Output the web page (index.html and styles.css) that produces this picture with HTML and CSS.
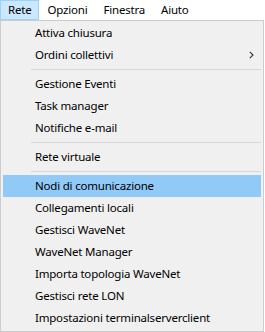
FILE: index.html
```html
<!DOCTYPE html>
<html>
<head>
<meta charset="utf-8">
<link rel="stylesheet" href="styles.css">
</head>
<body>
<div class="menubar">
  <span class="top active">Rete</span>
  <span class="top">Opzioni</span>
  <span class="top">Finestra</span>
  <span class="top">Aiuto</span>
</div>
<div class="menu">
  <div class="item">Attiva chiusura</div>
  <div class="item sub">Ordini collettivi<svg class="arrow" width="5" height="8" viewBox="0 0 5 8"><path d="M0.8 0.8 L4 4 L0.8 7.2" fill="none" stroke="#333" stroke-width="1.1"/></svg></div>
  <div class="sep"></div>
  <div class="item">Gestione Eventi</div>
  <div class="item">Task manager</div>
  <div class="item">Notifiche e-mail</div>
  <div class="sep"></div>
  <div class="item">Rete virtuale</div>
  <div class="sep"></div>
  <div class="item hl">Nodi di comunicazione</div>
  <div class="item">Collegamenti locali</div>
  <div class="item">Gestisci WaveNet</div>
  <div class="item">WaveNet Manager</div>
  <div class="item">Importa topologia WaveNet</div>
  <div class="item">Gestisci rete LON</div>
  <div class="item">Impostazioni terminalserverclient</div>
</div>
</body>
</html>
```
FILE: styles.css
```css
html, body {
  margin: 0;
  padding: 0;
  background: #ffffff;
}
body {
  font-family: "Noto Sans", "Open Sans", sans-serif;
  font-size: 11.5px;
  letter-spacing: -0.2px;
  color: #000;
  width: 265px;
  height: 332px;
  overflow: hidden;
}
.menubar {
  display: flex;
  height: 20px;
  background: #fff;
}
.top {
  box-sizing: border-box;
  height: 20px;
  padding: 0 7px;
  line-height: 18px;
  border: 1px solid transparent;
}
.top.active {
  background: #cce8ff;
  border-color: #99d1ff;
}
.menu {
  box-sizing: border-box;
  width: 264px;
  height: 312px;
  background: #f0f0f0;
  border: 1px solid #cccccc;
  padding: 1px 2px 1px 2px;
}
.item {
  height: 22px;
  line-height: 22px;
  padding-left: 32px;
  position: relative;
  white-space: nowrap;
}
.item.hl {
  background: #91c9f7;
}
.arrow {
  position: absolute;
  left: 246px;
  top: 7px;
}
.sep {
  height: 7px;
  display: flex;
  align-items: center;
  padding-left: 28px;
}
.sep::before {
  content: "";
  display: block;
  height: 1px;
  flex: 1;
  background: #d7d7d7;
}
```
